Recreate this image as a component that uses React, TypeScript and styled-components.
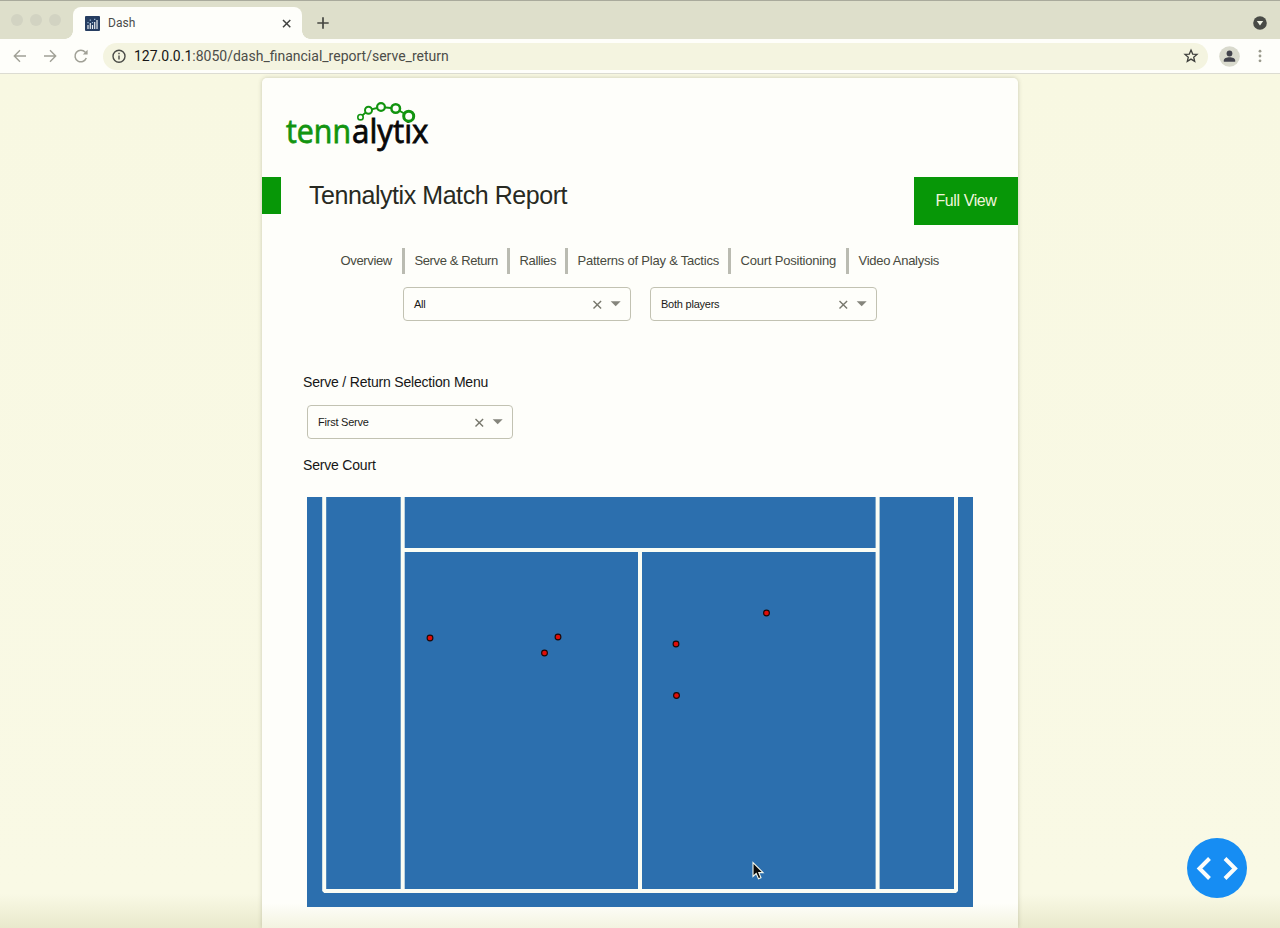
import React from "react";
import styled, { createGlobalStyle } from "styled-components";

const Global = createGlobalStyle`
  * { box-sizing: border-box; }
  html, body { margin: 0; background: #f8f8e6; overflow: hidden; }
  body { font-family: "Liberation Sans", Arial, sans-serif; color: #1b1b1b; }
`;

const Window = styled.div`
  height: 928px;
  display: flex;
  flex-direction: column;
  overflow: hidden;
`;

const TabBar = styled.div`
  height: 39px;
  flex: none;
  display: flex;
  align-items: flex-end;
  background: #dedfcb;
  border-top: 1px solid #a9aa9c;
`;

const Lights = styled.div`
  width: 73px;
  height: 38px;
  display: flex;
  gap: 7px;
  padding: 13px 0 0 11px;
`;

const Light = styled.span`
  width: 12px;
  height: 12px;
  border-radius: 50%;
  background: #d2d3c2;
`;

const Tab = styled.div`
  position: relative;
  width: 229px;
  height: 32px;
  display: flex;
  align-items: center;
  padding: 0 9px 0 12px;
  background: #fefefa;
  border-radius: 8px 8px 0 0;
  &::before, &::after {
    content: "";
    position: absolute;
    bottom: 0;
    width: 8px;
    height: 8px;
  }
  &::before { left: -8px; background: radial-gradient(circle at 0 0, transparent 7.5px, #fefefa 8px); }
  &::after { right: -8px; background: radial-gradient(circle at 100% 0, transparent 7.5px, #fefefa 8px); }
`;

const TabTitle = styled.span`
  flex: 1;
  margin-left: 8px;
  font: 12px Roboto, sans-serif;
  letter-spacing: 0.05px;
  color: #4b4c4b;
`;

const NewTab = styled.div`
  flex: 1;
  height: 32px;
  display: flex;
  align-items: center;
  justify-content: space-between;
  padding: 0 13px 0 15px;
`;

const Toolbar = styled.div`
  height: 35px;
  flex: none;
  display: flex;
  align-items: center;
  background: #fefefa;
  border-bottom: 1px solid #dcdcd2;
`;

const NavIcons = styled.div`
  width: 103px;
  display: flex;
  align-items: center;
  gap: 14px;
  padding-left: 12px;
`;

const Address = styled.div`
  width: 1105px;
  height: 27px;
  display: flex;
  align-items: center;
  padding: 0 9px 0 8px;
  border-radius: 14px;
  background: #f4f4e0;
`;

const Url = styled.span`
  flex: 1;
  margin-left: 7px;
  font: 14px Roboto, sans-serif;
  letter-spacing: 0;
  color: #4c4d49;
  b { font-weight: 400; color: #161616; }
`;

const ToolEnd = styled.div`
  display: flex;
  align-items: center;
  gap: 11px;
  padding-left: 11px;
`;

const Viewport = styled.main`
  position: relative;
  flex: 1;
  padding-top: 4px;
  background: linear-gradient(to bottom, #f8f8e2 0, #f9f9e5 820px, #e9e9cc 854px);
`;

const Card = styled.section`
  width: 756px;
  height: 850px;
  margin: 0 auto;
  background: linear-gradient(to bottom, #fefefa 825px, #f3f3e0 850px);
  border-radius: 5px 5px 0 0;
  box-shadow: 0 0 4px rgba(90, 90, 60, 0.3);
`;

const LogoArea = styled.div`
  height: 99px;
  padding: 20px 0 0 20px;
`;

const Header = styled.header`
  height: 48px;
  display: flex;
  align-items: flex-start;
`;

const Accent = styled.div`
  width: 19px;
  height: 37px;
  background: #079707;
`;

const Title = styled.h1`
  flex: 1;
  margin: 0 0 0 28px;
  font-size: 25px;
  font-weight: 400;
  line-height: 36px;
  letter-spacing: -0.44px;
  color: #282a22;
`;

const FullView = styled.button`
  width: 104px;
  height: 48px;
  padding: 0;
  border: 0;
  background: #079707;
  color: #f0f5dc;
  font: 16px "Liberation Sans", Arial, sans-serif;
  letter-spacing: -0.4px;
`;

const Nav = styled.nav`
  display: flex;
  margin-top: 23px;
  padding-left: 69px;
  height: 26px;
`;

const NavItem = styled.a<{ $w: number; $last?: boolean; $sp: number }>`
  width: ${(p) => p.$w}px;
  padding-left: 9.5px;
  border-right: ${(p) => (p.$last ? "0" : "3px solid #babbb1")};
  font-size: 13px;
  line-height: 25px;
  letter-spacing: ${(p) => p.$sp}px;
  color: #484a3e;
  white-space: nowrap;
`;

const Filters = styled.div`
  display: flex;
  gap: 19px;
  padding: 13px 0 0 141px;
`;

const Select = styled.div<{ $w: number }>`
  width: ${(p) => p.$w}px;
  height: 34px;
  display: flex;
  align-items: center;
  padding: 0 8px 0 10px;
  border: 1px solid #c2c2b2;
  border-radius: 4px;
  font-size: 11px;
  letter-spacing: -0.23px;
  color: #1b1b18;
`;

const SelectValue = styled.span`
  flex: 1;
`;

const Panel = styled.div`
  padding: 51px 0 0 41px;
`;

const Label = styled.h2`
  margin: 0;
  font-size: 14px;
  font-weight: 400;
  line-height: 20px;
  letter-spacing: -0.19px;
  color: #161616;
`;

const Field = styled.div`
  padding: 13px 0 16px 4px;
`;

const CourtArea = styled.div`
  padding: 22px 0 0 4px;
  svg { display: block; }
`;

const DevButton = styled.button`
  position: absolute;
  right: 33px;
  bottom: 30px;
  width: 60px;
  height: 60px;
  padding: 0;
  border: 0;
  border-radius: 50%;
  background: #168df3;
  svg { display: block; }
`;

const Pointer = styled.svg`
  position: absolute;
  left: 751px;
  top: 787px;
`;

const SERVES = [[123, 141], [237.5, 156], [251, 140], [369, 147], [369.5, 198.5], [459.5, 116]];

const Logo = () => (
  <svg width="152" height="56" viewBox="282 98 152 56">
    <g fontFamily='"Open Sans", sans-serif' fontSize="33" strokeWidth=".8">
      <text x="286" y="142.7" fill="#12940f" stroke="#12940f" textLength="65" lengthAdjust="spacingAndGlyphs">tenn</text>
      <text x="352" y="142.7" fill="#080808" stroke="#080808" textLength="76.5" lengthAdjust="spacingAndGlyphs">alytix</text>
    </g>
    <polyline points="360.5,117 368.5,110 381,107 395.5,108.5 408.5,116" fill="none" stroke="#12940f" strokeWidth="1.8" />
    <g fill="#fefefb" stroke="#12940f">
      <circle cx="360.5" cy="117.2" r="2.7" strokeWidth="1.6" />
      <circle cx="368.5" cy="110.3" r="3.5" strokeWidth="2" />
      <circle cx="381" cy="107" r="3.9" strokeWidth="2.2" />
      <circle cx="395.7" cy="108.5" r="4.3" strokeWidth="2.5" />
      <circle cx="408.7" cy="116.2" r="5" strokeWidth="3" />
    </g>
  </svg>
);

const Dropdown = ({ value, width }: { value: string; width: number }) => (
  <Select $w={width}>
    <SelectValue>{value}</SelectValue>
    <svg width="30" height="12" viewBox="0 0 30 12">
      <path d="M1.5 3l7.6 7.6M9.1 3L1.5 10.6" stroke="#77776c" strokeWidth="1.4" />
      <path d="M18.7 3.2h10l-5 5z" fill="#85857c" />
    </svg>
  </Select>
);

const Court = () => (
  <svg width="666" height="410">
    <rect width="666" height="410" fill="#2c6fae" />
    <path d="M17.2 0V394H649V0M95.7 0V392M570.6 0V392M97 53H570M333 53V392" fill="none" stroke="#fbfdf4" strokeWidth="4" strokeLinejoin="bevel" />
    {SERVES.map(([x, y]) => (
      <circle key={`${x}-${y}`} cx={x} cy={y} r="2.9" fill="#e00d08" stroke="#1c0808" strokeWidth="1.1" />
    ))}
  </svg>
);

export default function App() {
  return (
    <Window>
      <Global />
      <TabBar>
        <Lights><Light /><Light /><Light /></Lights>
        <Tab>
          <svg width="15" height="15">
            <rect width="15" height="15" rx="1" fill="#263d61" />
            <path d="M3 9v4M5.3 7v6M7.5 9v4M9.7 6v7M12 4v9" stroke="#e8edf0" strokeWidth="1.2" />
            <path d="M3 6v1.3M5.3 3.5v1.3M7.5 6v1.3M9.7 2.8v1.3" stroke="#9fc0dc" strokeWidth="1.2" />
          </svg>
          <TabTitle>Dash</TabTitle>
          <svg width="13" height="13"><path d="M3 3l7.3 7.3M10.3 3L3 10.3" stroke="#424340" strokeWidth="1.5" /></svg>
        </Tab>
        <NewTab>
          <svg width="12" height="12"><path d="M6 .3v11.4M.3 6h11.4" stroke="#464742" strokeWidth="1.7" /></svg>
          <svg width="14" height="14"><circle cx="7" cy="7" r="6.8" fill="#494b47" /><path d="M3.8 5h6.4L7 9.5z" fill="#f1f3e5" /></svg>
        </NewTab>
      </TabBar>
      <Toolbar>
        <NavIcons>
          <svg width="16" height="16" fill="none" stroke="#a0a096" strokeWidth="1.4"><path d="M14 8H2.3M8 2.3L2.3 8 8 13.7" /></svg>
          <svg width="16" height="16" fill="none" stroke="#a0a096" strokeWidth="1.4"><path d="M2 8h11.7M8 2.3L13.7 8 8 13.7" /></svg>
          <svg width="16" height="16" fill="none" stroke="#a0a096" strokeWidth="1.5"><path d="M14.3 10A5.8 5.8 0 1 1 13.3 4.3" /><path d="M15.6 1.8v4.8h-4.8z" fill="#a0a096" stroke="none" /></svg>
        </NavIcons>
        <Address>
          <svg width="16" height="16"><circle cx="8" cy="8.3" r="6" fill="none" stroke="#4a4b47" strokeWidth="1.4" /><path d="M8 7.5v4M8 4.8v1.5" stroke="#4a4b47" strokeWidth="1.4" /></svg>
          <Url><b>127.0.0.1</b>:8050/dash_financial_report/serve_return</Url>
          <svg width="16" height="16" viewBox="0 0 16 16"><path d="M8 2.1l1.7 4 4.3.3-3.3 2.8 1 4.2L8 11.1l-3.7 2.3 1-4.2L2 6.4l4.3-.3z" fill="none" stroke="#3e3f3c" strokeWidth="1.3" /></svg>
        </Address>
        <ToolEnd>
          <svg width="21" height="21"><circle cx="10.5" cy="10.5" r="10.3" fill="#d9dacd" /><circle cx="10.5" cy="7.5" r="2.9" fill="#42434c" /><path d="M4.8 15.8v-1.3c0-4.2 11.4-4.2 11.4 0v1.3z" fill="#42434c" /></svg>
          <svg width="18" height="14" fill="#9a9a8d"><circle cx="9" cy="2.2" r="1.4" /><circle cx="9" cy="7" r="1.4" /><circle cx="9" cy="11.8" r="1.4" /></svg>
        </ToolEnd>
      </Toolbar>
      <Viewport>
        <Card>
          <LogoArea><Logo /></LogoArea>
          <Header>
            <Accent />
            <Title>Tennalytix Match Report</Title>
            <FullView>Full View</FullView>
          </Header>
          <Nav>
            <NavItem $w={74} $sp={-0.35}>Overview</NavItem>
            <NavItem $w={105} $sp={-0.4}>Serve &amp; Return</NavItem>
            <NavItem $w={58} $sp={-0.35}>Rallies</NavItem>
            <NavItem $w={163} $sp={-0.22}>Patterns of Play &amp; Tactics</NavItem>
            <NavItem $w={118} $sp={-0.2}>Court Positioning</NavItem>
            <NavItem $w={100} $sp={-0.27} $last>Video Analysis</NavItem>
          </Nav>
          <Filters>
            <Dropdown value="All" width={228} />
            <Dropdown value="Both players" width={227} />
          </Filters>
          <Panel>
            <Label>Serve / Return Selection Menu</Label>
            <Field><Dropdown value="First Serve" width={206} /></Field>
            <Label>Serve Court</Label>
            <CourtArea><Court /></CourtArea>
          </Panel>
        </Card>
        <DevButton aria-label="Developer tools">
          <svg width="60" height="60" fill="none" stroke="#fbfdfb" strokeWidth="4"><path d="M22.5 20.5L12.5 30.5 22.5 40.5M38 20.5L48 30.5 38 40.5" /></svg>
        </DevButton>
        <Pointer width="14" height="20"><path d="M2 1.5v14l3.2-3 2.3 5.2 2.5-1-2.2-5.1h4.3z" fill="#0b0b0b" stroke="#f6f8ec" strokeWidth="1.1" /></Pointer>
      </Viewport>
    </Window>
  );
}
